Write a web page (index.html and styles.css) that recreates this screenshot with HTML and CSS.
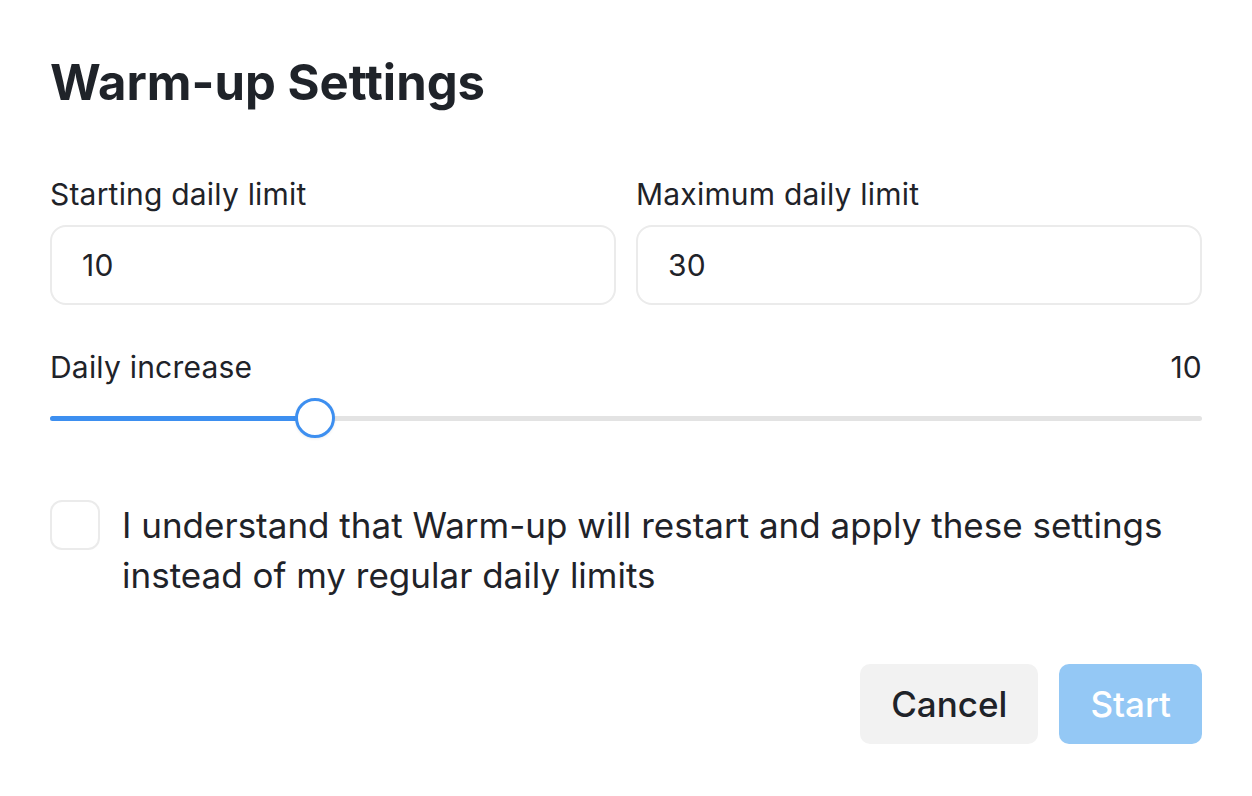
FILE: index.html
```html
<!DOCTYPE html>
<html lang="en">
<head>
<meta charset="utf-8">
<title>Warm-up Settings</title>
<link rel="stylesheet" href="styles.css">
</head>
<body>
<div class="dialog">
  <h1 class="title">Warm-up Settings</h1>
  <div class="fields">
    <div class="field">
      <label class="label">Starting daily limit</label>
      <div class="input">10</div>
    </div>
    <div class="field">
      <label class="label">Maximum daily limit</label>
      <div class="input">30</div>
    </div>
  </div>
  <div class="range-head">
    <span class="label">Daily increase</span>
    <span class="label">10</span>
  </div>
  <div class="slider">
    <div class="track"><div class="fill" style="width: 23%"></div></div>
    <div class="thumb" style="left: 23%"></div>
  </div>
  <div class="confirm">
    <div class="checkbox"></div>
    <p class="confirm-text">I understand that Warm-up will restart and apply these settings instead of my regular daily limits</p>
  </div>
  <div class="actions">
    <button class="btn btn-cancel">Cancel</button>
    <button class="btn btn-start">Start</button>
  </div>
</div>
</body>
</html>
```

FILE: styles.css
```css
* { box-sizing: border-box; }
html, body { margin: 0; padding: 0; background: #ffffff; }
body { font-family: Inter, "Noto Sans", sans-serif; color: #1f2329; }

.dialog {
  width: 1252px;
  padding: 53px 50px 0 50px;
  display: flex;
  flex-direction: column;
}

.title {
  margin: 0;
  font-size: 49px;
  line-height: 60px;
  font-weight: 700;
}

.fields {
  margin-top: 63px;
  display: grid;
  grid-template-columns: 1fr 1fr;
  gap: 20px;
}

.field { display: flex; flex-direction: column; gap: 13px; }

.label {
  font-size: 30px;
  line-height: 36px;
  font-weight: 400;
  letter-spacing: 0.2px;
}

.input {
  height: 80px;
  border: 2px solid #ebebeb;
  border-radius: 16px;
  padding: 0 30px;
  display: flex;
  align-items: center;
  font-size: 30px;
  letter-spacing: 0.2px;
}

.range-head {
  margin-top: 44px;
  display: flex;
  justify-content: space-between;
}

.slider {
  margin-top: 13px;
  height: 40px;
  position: relative;
  display: flex;
  align-items: center;
}

.track {
  width: 100%;
  height: 5px;
  border-radius: 3px;
  background: #e3e3e3;
  overflow: hidden;
}

.fill { height: 100%; background: #3d8ff0; }

.thumb {
  position: absolute;
  top: 0;
  width: 40px;
  height: 40px;
  margin-left: -20px;
  border-radius: 50%;
  border: 3px solid #3d8ff0;
  background: #fff;
  box-shadow: 0 1px 3px rgba(0,0,0,0.08);
}

.confirm {
  margin-top: 62px;
  display: flex;
  align-items: flex-start;
  gap: 22px;
}

.checkbox {
  flex: 0 0 50px;
  width: 50px;
  height: 50px;
  border: 2px solid #ebebeb;
  border-radius: 12px;
}

.confirm-text {
  margin: 0;
  font-size: 35px;
  line-height: 50px;
}

.actions {
  margin-top: 64px;
  display: flex;
  justify-content: flex-end;
  gap: 21px;
}

.btn {
  height: 80px;
  border: none;
  border-radius: 10px;
  padding: 0 31px;
  font-family: Inter, "Noto Sans", sans-serif;
  font-size: 35px;
  font-weight: 500;
}

.btn-cancel { background: #f2f2f2; color: #1f2329; }
.btn-start { background: #94c8f5; color: #ffffff; }
```
